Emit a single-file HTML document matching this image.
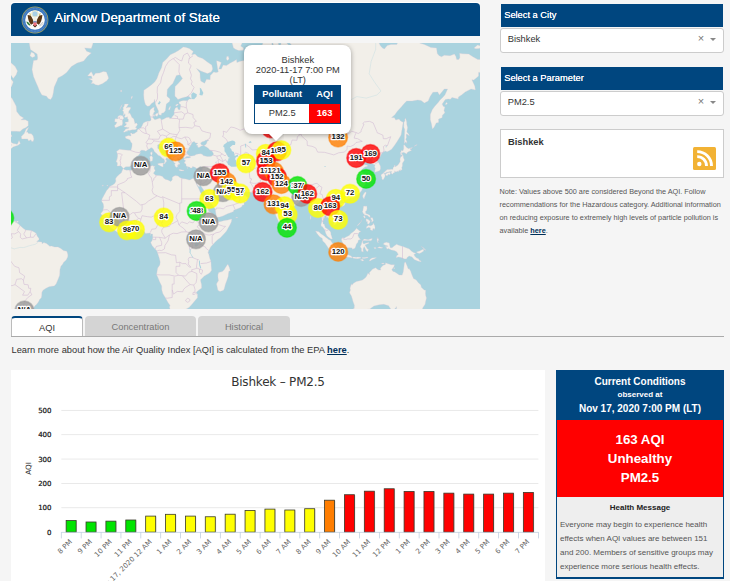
<!DOCTYPE html>
<html lang="en">
<head>
<meta charset="utf-8">
<title>AirNow Department of State</title>
<style>
*{box-sizing:border-box;margin:0;padding:0}
html,body{width:730px;height:581px;overflow:hidden;background:#f5f5f5;font-family:"Liberation Sans",Arial,sans-serif;color:#333}
.abs{position:absolute}
#hdr{left:11px;top:3px;width:469px;height:33px;background:#00467f;border-radius:4px 4px 0 0}
#hdr .t{position:absolute;left:43.3px;top:6px;font-size:13.3px;color:#fff;white-space:nowrap;line-height:17px;text-shadow:0 0 0.4px #fff}
#map{left:11px;top:43px;width:469px;height:266px;background:#aad3df;overflow:hidden}
.ph{background:#00467f;color:#fff;font-size:9.3px;line-height:22.6px;padding-left:3.2px;height:23.5px;text-shadow:0 0 0.3px #fff}
.sel{background:#fff;border:1px solid #ccc;border-radius:3px;height:24.5px;font-size:9.3px;line-height:21.8px;padding-left:6.7px;color:#333}
.tab{top:316px;height:21px;font-size:9.3px;text-align:center;line-height:23.6px;border-radius:4px 4px 0 0}
.tab.off{background:#d4d4d4;color:#777}
.tab.on{background:#fff;border:1px solid #bbb;border-top:2px solid #00467f;border-bottom:none;color:#333;line-height:20.6px}
#chart{left:11px;top:370px;width:534px;height:211px;background:#fff}
#cc{left:556px;top:370px;width:168px;height:209px;background:#eee;border:1px solid #00467f;border-bottom-width:2px}
#pop{position:absolute;left:233.4px;top:2px;width:106.8px;height:88.5px;background:#fff;border-radius:8px;box-shadow:0 1px 5px rgba(0,0,0,.35);padding-top:10px;text-align:center;font-size:9.3px;color:#333}
#pop .l{line-height:10px;height:10px}
#pop table{position:absolute;left:9.8px;top:39.5px;width:86.8px;border-collapse:collapse;border:1px solid #00467f;font-size:9.3px}
#pop th{background:#00467f;color:#fff;height:19px;font-weight:bold;padding:0 0 1.5px 0;line-height:10px}
#pop td{height:19.6px;padding:0 0 1px 0;line-height:10px;background:#fff;color:#333}
#pop td.v{background:#ff0000;color:#fff;font-weight:bold}
#tip{position:absolute;left:257.5px;top:90.5px;width:15px;height:10px;overflow:hidden}
#tip:after{content:"";position:absolute;left:2.5px;top:-5px;width:10px;height:10px;background:#fff;transform:rotate(45deg);box-shadow:0 1px 5px rgba(0,0,0,.35)}
.x{font-size:11px;color:#777;line-height:12px;width:8px;text-align:center}
.car{width:0;height:0;border-left:3px solid transparent;border-right:3px solid transparent;border-top:3.5px solid #888}
#rss{left:500px;top:129px;width:224px;height:49px;background:#fff;border:1px solid #ccc;padding:7px 0 0 7px;font-size:9.3px;color:#333}
#note{left:499.5px;top:185px;width:226px;font-size:7.3px;line-height:13px;color:#555;white-space:normal}
#note b{color:#00305a}
#learn{left:11.5px;top:344px;font-size:9.3px;line-height:12px;color:#333;white-space:nowrap}
#learn b{color:#00305a}
#cc .h{background:#00467f;color:#fff;font-weight:bold;text-align:center;height:50px;margin:-1px -1px 0 -1px;padding-top:5px}
#cc .h .a{font-size:10px;line-height:13px;margin-top:-0.5px}
#cc .h .b{font-size:8px;line-height:14px}
#cc .h .c{font-size:10px;line-height:14px}
#cc .r{background:#ff0000;color:#fff;font-weight:bold;text-align:center;font-size:13.3px;line-height:19px;height:77px;padding-top:10px}
#cc .m{font-size:8px;line-height:14px;color:#555;padding:3px 0 0 3px;white-space:normal}
#cc .m .t{font-size:8px;font-weight:bold;color:#222;text-align:center;line-height:16px;padding-right:3px;margin-bottom:1.7px}
</style>
</head>
<body>
<div class="abs" style="left:11px;top:2px;width:469px;height:2px;background:#fff;border-radius:3px 3px 0 0"></div>
<div id="hdr" class="abs"><svg width="30" height="30" viewBox="-15 -15 30 30" style="position:absolute;left:8.9px;top:2.2px">
<circle r="13.4" fill="#a9a55c"/><circle r="12.7" fill="#3a76bd"/><circle r="11.3" fill="none" stroke="#7fa8d8" stroke-width="0.7" stroke-dasharray="0.7 0.8"/><circle r="9.8" fill="#fcfcfa"/>
<circle cx="0" cy="-6.1" r="2.7" fill="#a8cfe6"/><circle cx="0" cy="-6.1" r="3.3" fill="none" stroke="#dedcb4" stroke-width="0.7"/>
<path d="M-7.4-4.9L-4.3-4.5C-3.3-3-2.6-1.4-1.7 0.4L-1.5 3.2L-3.9 4.7C-5.7 3-7-0.2-7.4-4.9Z" fill="#5b3716"/>
<path d="M7.4-4.9L4.3-4.5C3.3-3 2.6-1.4 1.7 0.4L1.5 3.2L3.9 4.7C5.7 3 7-0.2 7.4-4.9Z" fill="#5b3716"/>
<path d="M-1.7-1.4C-0.9-2.6 0.9-2.6 1.7-1.4L1.7 1.6L-1.7 1.6Z" fill="#f1efe6"/>
<path d="M-2.2 5.6L0 7.6L2.2 5.6L1.2 4.6L-1.2 4.6Z" fill="#4a2e14"/>
<path d="M-1.6 1.4H1.6V2.6H-1.6Z" fill="#2a5aa8"/><path d="M-1.6 2.6H1.6V4.2C1.6 5.2 0.7 5.7 0 6C-0.7 5.7-1.6 5.2-1.6 4.2Z" fill="#ee6f7b"/>
<path d="M-8.6 1.6C-8.2 3.8-6.8 5.4-4.4 5.8C-5.2 3.6-6.4 2.2-8.6 1.6Z" fill="#2f7a3a"/>
<path d="M4.2 5.6L8 2M4.8 6.2L8.6 3.2" stroke="#aaa" stroke-width="0.6" fill="none"/>
<path d="M-5.2-6.8L-4.5-4.6M5.2-6.8L4.5-4.6" stroke="#c8b44a" stroke-width="0.9"/>
</svg><div class="t">AirNow Department of State</div></div>
<div id="map" class="abs">
<svg width="469" height="266" viewBox="0 0 469 266" style="position:absolute;left:0;top:0">
<path d="M111.9 125.9L110.2 130.1L108.7 131.0L105.6 133.9L104.5 135.9L104.9 138.1L103.9 140.3L102.0 141.8L98.6 143.5L97.6 145.3L95.6 147.4L92.9 152.4L91.0 155.9L90.7 158.3L92.3 160.9L92.7 163.7L91.8 167.9L89.8 170.4L91.4 172.9L91.2 174.9L92.7 175.8L94.6 177.8L97.1 180.5L98.0 182.4L99.4 184.5L102.6 186.6L106.0 189.0L108.5 190.2L111.7 189.2L115.5 188.7L119.2 189.6L122.8 188.1L125.4 186.9L129.6 186.4L131.9 186.9L133.4 188.8L134.6 190.4L136.9 190.2L138.9 190.0L140.1 190.9L141.6 191.1L141.8 194.9L141.0 197.7L139.7 199.6L141.2 202.7L144.1 205.9L145.6 207.6L146.6 209.9L148.3 215.2L149.2 219.0L148.8 221.9L146.7 225.0L146.2 227.6L145.6 231.7L147.1 235.1L148.7 238.9L150.7 243.0L150.7 246.5L151.9 250.7L154.5 255.0L157.0 259.5L159.1 262.4L158.4 264.0L159.3 266.9L161.0 268.1L162.4 268.7L165.2 267.1L167.9 266.9L173.6 266.9L178.0 264.6L180.8 261.5L183.9 257.8L186.5 254.7L186.5 251.3L185.2 249.4L186.9 247.7L190.7 245.0L190.5 241.3L189.8 238.7L189.6 236.7L193.4 232.9L197.4 230.7L199.1 229.5L200.6 227.2L200.2 223.3L200.0 218.5L198.9 215.6L197.9 211.4L197.0 209.7L197.7 207.8L198.7 206.1L199.8 203.8L201.2 202.3L204.0 199.3L206.9 196.4L209.4 194.7L212.2 191.7L215.4 188.3L217.3 184.7L218.9 182.0L220.4 178.7L220.8 176.0L219.3 176.2L216.8 177.0L213.4 177.4L208.8 178.7L206.9 178.5L205.4 176.8L204.4 176.4L205.5 174.5L204.4 173.7L201.6 170.8L198.9 169.2L197.7 168.2L196.6 163.9L194.3 162.3L193.9 160.7L193.8 157.9L193.4 155.9L190.9 152.0L189.0 148.4L187.5 145.0L185.9 142.3L184.8 139.7L185.2 139.1L185.9 141.4L187.1 142.9L188.3 143.9L189.0 142.0L189.7 140.1L189.4 142.3L190.1 143.3L191.1 144.8L193.2 148.0L194.1 149.9L195.5 151.5L197.2 154.2L197.6 156.9L199.3 159.5L201.4 161.7L203.1 164.5L204.2 166.1L204.8 170.2L205.4 173.1L205.9 174.3L208.8 174.1L212.0 172.9L214.5 171.8L216.6 170.8L220.2 169.4L222.5 168.6L222.7 167.3L226.1 165.9L228.4 165.1L230.5 163.9L231.6 162.1L233.1 161.9L233.0 159.5L234.7 159.1L236.0 157.1L236.9 154.8L235.4 153.6L234.7 152.6L232.4 152.0L231.1 150.9L230.5 149.7L230.4 146.9L229.8 147.6L229.7 148.2L228.4 149.0L226.7 150.9L224.4 151.5L221.7 151.7L220.8 150.7L221.3 149.7L221.3 147.8L220.7 147.3L219.8 148.4L219.8 150.1L218.9 149.0L218.5 146.7L217.5 144.8L216.2 143.8L215.3 142.0L214.5 140.3L214.1 139.2L215.4 139.0L216.4 138.1L217.5 138.8L218.7 139.2L219.8 141.4L221.0 143.5L223.2 144.6L225.2 146.1L227.6 146.4L229.7 145.3L231.4 145.5L232.0 147.2L233.1 148.3L235.4 148.8L238.5 149.0L240.4 149.4L241.7 149.5L244.0 149.1L246.1 149.3L248.7 148.8L249.9 149.7L250.7 150.1L251.4 152.0L252.9 152.6L254.1 153.8L256.9 153.9L256.6 154.8L254.5 155.2L255.0 156.7L257.1 158.3L259.2 158.1L260.4 157.5L260.9 155.4L261.5 156.3L261.5 157.7L261.7 159.9L261.7 161.9L262.4 165.1L263.0 167.9L264.0 170.0L265.1 173.3L266.6 176.4L268.2 179.7L269.3 182.0L270.6 183.2L272.0 181.8L273.7 180.8L275.2 178.9L275.0 176.4L276.0 173.5L275.6 170.6L275.8 168.8L277.7 167.9L279.8 166.5L281.7 164.5L283.4 162.9L284.9 161.3L287.6 160.0L288.7 158.3L289.1 156.9L291.0 156.5L293.5 156.3L295.4 155.2L297.1 154.4L297.8 155.2L298.2 157.1L298.8 158.5L299.9 159.7L301.3 161.3L302.4 162.5L303.0 165.1L302.4 167.9L304.7 168.2L306.2 167.1L307.6 165.7L308.9 167.1L309.1 169.4L309.8 171.8L310.8 174.9L311.0 177.2L310.6 179.5L310.0 181.6L310.2 183.3L311.2 183.5L312.7 185.4L314.0 187.5L314.6 190.0L315.9 192.8L317.6 194.3L319.9 195.9L321.4 195.9L320.7 193.6L319.9 191.3L319.9 189.8L319.3 188.5L317.6 186.8L315.9 185.4L314.6 184.9L313.6 182.4L313.3 181.0L312.1 181.0L311.9 178.5L312.7 176.2L313.4 174.5L313.5 173.1L314.4 172.7L315.3 173.1L315.2 174.3L316.7 174.3L318.2 175.7L319.2 177.2L320.1 178.3L322.0 178.7L323.0 179.7L322.6 182.2L323.7 181.8L325.8 180.3L326.4 178.7L327.3 178.6L328.9 177.8L330.6 176.8L331.0 175.8L331.3 173.9L331.0 172.2L330.4 169.2L329.1 167.7L327.9 166.7L326.0 164.9L324.3 162.5L324.7 160.3L326.2 158.7L327.0 157.9L328.7 156.9L330.8 156.9L331.9 157.3L332.1 158.9L332.9 159.3L333.4 157.5L335.9 156.5L338.2 155.9L339.3 154.6L340.5 155.2L342.8 154.4L345.2 153.0L347.9 150.7L349.6 149.0L350.7 147.6L351.5 145.5L352.8 143.3L354.6 141.2L355.1 139.2L353.2 138.4L355.1 137.0L355.1 135.3L353.4 133.5L352.1 129.4L350.2 128.3L350.6 126.9L352.3 125.2L354.4 123.8L356.3 123.4L356.5 122.2L354.2 121.7L352.8 121.2L350.6 122.8L349.4 121.9L350.0 121.2L348.1 120.5L347.1 118.3L348.7 117.8L350.7 116.1L353.4 114.1L354.9 113.6L355.7 114.6L354.0 117.1L354.6 118.6L356.5 117.4L359.9 115.9L361.4 117.1L361.6 119.1L360.6 120.5L362.4 121.2L364.1 121.9L363.5 123.8L364.3 125.5L363.7 128.3L364.1 129.3L366.2 128.5L367.9 128.0L369.0 127.3L369.6 125.5L369.4 123.1L368.4 121.2L367.5 119.3L365.8 117.8L366.0 116.4L367.5 115.9L369.0 114.1L370.2 111.4L371.1 110.1L372.1 109.3L374.2 108.0L376.1 108.8L378.2 107.8L380.6 106.2L383.1 103.0L385.8 99.0L388.0 95.4L390.1 92.0L390.7 88.2L391.5 83.6L392.2 79.3L389.6 78.0L388.0 76.1L384.8 77.1L383.5 74.8L380.6 74.5L383.9 71.8L386.1 68.5L390.3 63.9L393.4 60.3L395.7 58.1L401.0 58.1L406.7 57.0L410.1 57.6L413.4 60.0L417.2 58.1L419.1 53.6L421.9 49.3L426.7 48.9L428.4 52.0L433.3 46.0L436.6 46.0L433.9 52.0L431.4 54.7L428.6 57.4L427.4 59.2L423.8 63.2L421.4 66.4L419.3 71.5L419.3 76.8L420.4 80.6L421.4 86.1L423.1 84.3L425.2 79.9L427.6 79.6L427.6 76.1L431.1 74.8L431.4 72.2L433.9 69.8L433.0 67.4L433.9 63.9L432.2 63.2L431.2 61.1L434.3 56.6L437.1 55.9L439.4 56.3L441.0 54.4L447.2 56.1L447.4 54.0L450.5 52.0L454.3 48.9L460.0 46.0L464.4 46.9L463.8 43.1L460.9 36.7L462.8 37.1L464.7 35.4L467.6 33.1L467.6 29.4L473.3 29.4L477.1 35.4L477.1 16.0L466.8 16.5L461.9 13.8L457.7 11.1L451.4 10.8L448.6 10.3L448.9 14.4L447.8 16.5L445.7 16.5L444.8 13.3L443.4 11.1L439.0 12.7L433.3 12.2L430.5 13.8L428.2 12.7L426.3 10.6L425.5 4.9L420.0 4.6L413.4 1.4L408.6 0.1L404.8 -4.2L389.6 -6.1L385.8 1.4L380.1 1.4L376.2 2.5L373.4 6.0L371.5 4.9L369.6 3.1L368.4 0.8L364.8 -7.4L313.5 -36.7L283.0 -10.6L276.3 -10.6L276.5 -2.3L280.1 1.4L281.7 6.6L280.1 8.9L279.2 3.7L273.5 -2.3L270.6 -2.9L269.5 3.1L267.8 2.5L265.9 -6.1L262.1 -6.7L261.7 -1.1L263.8 8.9L263.8 14.4L267.4 16.5L270.6 21.1L271.6 23.1L269.3 22.1L265.5 18.0L263.4 19.6L262.1 24.6L260.2 28.9L255.4 28.0L258.8 26.5L260.7 21.1L261.3 14.9L261.3 6.0L260.7 -1.1L257.3 -7.4L253.5 -4.2L250.1 4.9L251.0 12.2L250.5 16.0L253.1 19.6L249.7 18.6L246.5 14.9L243.0 12.2L239.0 11.4L237.9 13.8L239.0 16.5L236.4 19.1L232.6 17.5L228.4 18.6L225.9 19.6L225.5 16.5L223.1 18.0L219.3 20.1L215.4 22.6L212.2 22.1L210.3 26.1L207.8 26.1L210.3 19.6L206.9 18.0L205.5 17.8L206.5 25.1L207.3 28.9L205.0 29.4L202.7 28.9L199.3 32.6L199.1 36.7L195.5 36.2L193.6 40.2L189.8 38.0L189.2 34.5L189.0 29.9L185.6 25.6L189.8 28.0L196.4 30.6L200.2 28.9L201.7 26.1L200.8 22.1L196.4 19.1L191.7 15.4L186.9 13.8L184.0 11.1L180.6 11.7L182.3 8.6L178.3 5.5L174.5 4.3L172.2 4.0L167.9 7.2L164.1 9.4L159.3 11.7L155.5 16.0L151.7 19.6L150.6 24.6L147.9 29.9L146.0 35.4L143.7 38.9L140.3 41.9L136.9 44.4L132.9 47.3L132.7 52.0L133.0 55.9L133.8 59.6L134.6 61.8L136.5 63.2L138.4 62.9L140.8 60.3L142.9 58.9L143.5 56.3L144.1 59.6L144.7 62.1L145.8 64.3L147.5 68.1L147.3 70.2L147.9 71.8L150.2 72.2L150.7 70.2L152.8 69.8L154.4 67.8L154.9 63.9L155.3 61.1L158.5 58.5L159.1 55.9L155.9 53.2L156.3 46.5L159.1 43.1L161.8 40.6L163.5 36.7L165.4 32.6L169.0 31.7L171.5 35.4L169.8 37.6L167.1 40.6L164.1 43.6L163.9 49.7L163.9 53.2L165.6 54.7L166.9 56.4L170.7 55.1L174.5 54.0L177.8 53.2L180.6 56.1L178.3 56.1L176.4 57.7L172.6 57.4L170.3 57.9L167.9 58.9L168.3 60.7L169.8 61.8L169.4 63.9L169.0 66.7L167.3 66.6L166.2 64.1L164.1 65.3L163.1 68.5L163.3 71.2L161.2 73.7L160.4 75.3L158.7 75.5L158.2 74.2L155.5 74.5L152.8 76.1L150.4 77.1L149.0 75.1L146.2 76.1L143.9 76.8L142.6 75.5L141.8 74.2L142.2 71.8L142.8 69.5L143.9 68.8L142.9 66.7L143.3 64.3L142.0 64.6L139.5 66.4L138.8 67.8L138.6 71.5L139.5 73.8L140.1 76.4L139.3 78.0L136.7 78.3L134.6 78.7L132.3 80.1L131.1 82.7L129.8 84.9L127.7 85.9L126.2 87.0L126.2 88.5L123.3 90.5L121.1 90.9L120.7 89.9L119.4 89.9L120.1 93.0L117.4 92.5L114.0 93.7L115.0 95.4L117.3 96.2L119.0 97.0L119.7 99.0L121.1 100.4L120.9 103.8L119.9 107.3L117.4 107.3L112.3 106.7L108.5 106.2L105.5 108.6L106.4 110.6L106.6 113.0L106.2 115.5L105.1 118.8L106.2 119.5L106.4 121.0L106.0 123.1L108.1 123.1L109.9 122.7L111.2 124.3L112.5 125.5L113.1 125.0L114.8 123.8L118.4 123.7L119.5 123.1L121.8 121.7L122.8 119.5L123.5 118.9L122.6 117.2L123.5 115.4L124.9 114.1L127.3 112.4L129.4 110.1L129.0 108.6L130.2 107.3L131.9 107.3L133.4 107.5L134.9 108.2L137.0 106.5L138.8 105.7L140.1 104.6L141.8 105.4L142.8 106.9L143.3 108.6L145.6 110.6L147.1 112.3L149.0 112.9L150.2 113.9L151.7 115.4L153.0 115.9L153.8 118.3L153.0 120.6L153.8 120.9L154.7 119.3L155.8 118.1L154.7 116.6L155.5 114.8L157.2 115.6L158.1 116.4L158.4 115.5L157.4 114.3L155.3 113.1L153.4 112.0L154.0 111.1L152.1 111.0L150.2 109.6L149.0 106.9L146.7 105.2L146.7 103.0L146.6 102.0L148.1 101.2L149.4 101.3L148.8 102.0L149.6 103.6L150.6 102.2L151.5 103.0L152.1 105.4L154.4 107.0L156.3 108.3L158.4 109.8L159.9 111.1L160.2 112.6L160.1 114.9L161.2 116.4L162.5 118.6L163.3 119.9L164.4 120.3L163.5 121.2L164.3 123.6L165.8 124.4L166.3 123.6L167.2 124.4L166.5 121.9L167.7 122.2L167.3 120.9L168.8 121.6L168.8 120.3L167.5 119.3L166.7 117.6L167.5 117.8L166.3 115.9L166.7 114.5L168.1 116.0L169.6 115.5L168.4 114.3L169.6 113.6L172.4 113.8L172.8 114.4L173.0 115.6L174.3 114.5L175.5 113.5L178.2 113.4L178.5 112.8L176.6 111.6L175.5 109.6L176.2 107.8L177.6 107.0L177.7 105.2L179.7 102.5L180.6 100.4L181.7 99.0L183.3 98.6L184.6 100.1L186.9 100.1L185.0 102.0L186.7 102.6L186.8 104.2L188.1 104.5L190.5 102.9L192.6 102.2L190.3 101.7L189.6 99.9L191.3 98.7L193.2 98.3L194.6 97.3L197.2 96.9L197.9 97.3L196.0 98.4L195.7 100.2L194.3 102.1L193.0 102.4L194.1 103.4L195.1 103.8L197.5 105.4L198.7 106.9L201.2 108.3L202.4 110.5L202.2 112.0L200.2 113.3L198.7 113.4L196.2 113.5L194.1 113.1L192.2 112.6L191.5 111.6L190.0 110.7L187.4 110.9L185.0 111.4L183.7 112.4L180.8 113.0L178.6 112.9L178.3 113.4L180.0 114.0L178.1 114.9L176.2 114.9L173.4 115.6L172.8 117.1L174.3 117.1L174.2 118.6L173.4 119.3L173.2 120.1L174.9 121.0L175.1 123.1L176.8 123.8L178.5 124.0L179.5 125.0L181.0 124.9L181.6 123.5L184.0 124.3L185.6 125.4L187.8 124.8L189.0 123.6L190.5 124.2L191.9 123.8L191.3 125.5L191.2 126.6L191.5 129.1L190.7 130.3L189.8 132.8L189.3 134.5L188.3 136.2L186.3 136.6L184.6 136.3L183.7 135.7L182.1 135.5L181.0 135.7L180.0 136.4L178.2 137.1L174.9 136.0L171.1 135.6L168.8 134.5L167.1 133.1L164.3 132.6L162.2 133.5L161.2 134.6L161.2 137.0L159.7 138.4L157.0 137.0L154.7 136.4L152.5 135.0L151.9 133.7L150.2 133.0L148.3 132.6L146.2 132.5L144.3 131.9L142.4 130.3L143.6 128.4L144.3 127.3L143.3 125.9L143.2 124.5L144.2 123.0L142.8 123.5L141.9 122.4L139.8 123.2L137.9 123.2L136.3 123.2L134.1 123.6L132.9 123.7L129.0 123.6L125.6 124.3L123.3 125.6L121.9 126.2L119.3 127.6L117.5 127.1L115.7 127.2L113.1 126.4L113.0 125.7ZM112.3 88.9L113.3 89.2L115.3 88.2L116.3 88.5L116.7 87.3L118.5 87.6L121.1 86.8L123.6 86.8L125.0 86.4L125.7 85.6L125.9 84.9L124.5 84.6L125.0 83.6L125.6 83.2L126.5 81.5L125.6 80.1L123.7 80.6L123.8 79.6L123.3 78.0L123.0 76.4L122.0 75.1L120.9 74.6L120.5 73.5L119.3 70.8L118.2 70.0L117.1 70.2L118.2 69.1L117.6 68.6L119.2 66.2L119.7 65.0L119.3 64.3L116.9 64.3L115.2 65.0L115.9 63.7L117.3 61.6L117.4 60.9L113.6 61.1L113.1 63.2L112.1 64.6L112.3 66.7L111.4 67.8L112.7 68.8L112.3 72.5L113.6 71.2L113.8 70.5L114.3 72.0L113.4 73.8L113.9 74.6L115.5 74.2L116.7 73.8L116.3 75.1L117.1 76.4L117.6 76.4L117.3 77.4L117.3 78.7L115.9 79.0L114.4 79.0L114.1 80.6L115.3 80.4L115.3 81.8L114.2 82.7L113.1 83.3L113.4 84.1L115.7 84.3L117.1 84.7L118.0 84.3L117.4 85.5L116.5 85.5L114.6 86.1L113.6 87.6ZM109.1 72.2L111.5 72.8L112.5 74.6L112.8 75.5L111.4 76.8L111.5 78.8L111.7 80.1L111.1 82.4L109.8 82.6L107.5 83.6L104.5 84.7L103.4 82.7L104.9 81.2L106.0 79.3L103.7 78.7L103.9 76.8L104.1 75.8L106.8 75.8L107.5 74.8L106.4 74.5L107.4 73.0ZM76.5 33.1L79.4 29.4L80.3 28.7L82.6 33.1L84.5 30.3L88.5 29.9L92.3 28.4L95.4 28.9L97.3 34.0L97.5 35.4L95.6 38.0L94.2 38.7L91.8 40.6L87.4 42.3L84.5 41.7L82.6 40.4L80.0 40.6L81.3 39.1L81.3 37.6L77.5 35.8L81.3 35.4L80.3 33.1ZM16.6 -7.4L18.5 1.4L19.4 6.6L26.1 11.1L26.7 14.9L26.1 17.0L22.5 17.5L21.0 26.5L22.5 33.5L24.8 38.9L27.0 44.0L28.6 48.1L30.9 52.0L35.6 53.2L37.1 55.5L39.6 56.6L41.3 54.0L42.3 50.1L43.2 44.0L46.1 37.6L47.0 34.9L51.6 32.6L55.6 29.4L60.4 23.6L66.1 20.1L72.7 18.0L76.5 13.3L80.3 10.0L75.6 8.3L73.7 4.9L80.3 5.5L81.9 0.8L81.9 -7.4ZM18.9 12.7L21.3 14.6L24.2 13.3L23.2 10.6L20.4 8.9ZM-8.2 46.0L-2.4 48.5L0.0 49.7L-0.4 45.6L-3.4 43.1L-6.3 41.0L-2.4 41.9L0.4 44.0L2.3 38.9L-0.5 35.4L-5.3 32.2L-5.3 29.4L-0.5 31.7L2.3 35.4L5.2 31.7L6.5 28.0L4.2 23.6L1.4 21.1L-4.4 16.0L-7.2 10.6L-8.2 7.8ZM-8.2 60.3L-5.3 62.1L-2.4 59.6L-0.5 55.9L0.6 54.4L3.3 59.6L5.2 63.2L5.7 68.5L9.0 72.8L12.8 75.1L9.9 76.8L14.3 76.8L17.2 78.3L17.3 82.4L15.1 84.6L11.8 86.1L9.0 88.5L5.2 88.3L1.4 88.2L-3.2 88.5L-5.3 91.1L-8.2 92.5L-8.2 94.0L-3.4 91.5L0.4 91.7L1.0 93.4L-2.4 94.7L-0.2 95.4L-0.5 97.3L0.4 99.5L2.3 100.6L5.2 100.9L6.1 101.4L7.1 99.8L8.0 97.6L9.4 100.4L7.1 102.2L2.1 104.1L-1.7 107.3L-2.6 106.2L-2.1 104.1L0.4 102.2L-0.2 100.9L-2.4 102.4L-4.4 102.8L-8.2 105.7ZM17.7 84.3L15.1 86.1L13.2 90.5L10.3 93.4L10.7 95.9L13.7 95.9L16.6 95.9L17.7 97.9L20.0 96.8L20.4 98.2L22.1 98.6L22.9 96.1L22.1 92.8L20.4 90.8L17.5 90.5L16.6 89.0L15.4 89.3L16.6 86.7ZM-8.2 176.6L-6.8 177.4L-4.2 178.3L-0.5 179.3L1.0 178.5L5.4 178.2L4.2 179.1L7.3 180.8L9.0 182.4L12.4 185.6L14.7 187.1L18.1 187.3L20.6 187.7L23.6 189.2L25.0 190.2L26.3 193.2L28.0 195.5L28.0 196.8L25.7 198.5L27.2 198.7L30.9 198.9L31.0 200.8L32.9 199.6L35.6 200.6L38.8 203.2L40.6 203.0L43.6 204.0L47.0 203.9L49.9 205.5L52.4 207.6L55.8 208.3L56.4 209.9L56.9 212.0L56.7 213.9L55.2 216.9L52.7 219.2L51.6 221.3L49.9 223.3L48.9 226.8L48.8 229.9L48.6 232.5L47.6 235.1L46.5 237.7L45.1 241.1L43.2 243.1L40.9 243.2L38.1 243.8L35.0 245.3L32.0 247.3L30.9 249.2L30.7 252.8L30.3 254.7L28.6 256.5L27.4 259.1L25.7 261.3L24.0 262.8L21.5 266.2L18.7 269.1L16.2 269.0L13.2 267.9L12.0 266.9L11.8 268.3L14.1 269.9L14.7 276.3L-8.2 276.3ZM5.4 179.4L7.1 179.3L7.3 178.0L5.7 178.2ZM371.9 136.8L370.9 136.2L370.9 134.4L370.2 133.0L370.0 131.7L371.3 131.0L372.3 130.1L373.2 129.2L374.5 128.0L376.2 126.5L378.5 126.5L380.4 126.2L382.0 126.2L382.0 124.8L383.3 123.4L383.3 122.4L384.4 121.9L383.9 122.9L384.2 123.7L386.1 122.7L387.7 121.0L389.2 118.6L389.0 116.1L389.6 114.4L390.1 112.9L390.9 113.8L391.3 112.1L392.2 112.4L392.4 114.6L393.4 116.9L392.6 118.6L391.5 120.1L391.4 123.1L390.7 124.8L391.2 126.2L389.4 128.0L389.2 126.4L388.9 127.5L388.0 127.2L387.4 128.7L386.5 127.9L386.1 128.7L383.9 128.7L383.6 127.8L383.7 129.4L382.3 130.1L381.5 131.3L380.2 130.3L380.2 129.6L380.8 128.6L379.5 128.4L378.2 128.8L375.1 129.4L374.7 130.2L372.4 130.2L373.8 131.0L373.8 131.9L374.3 132.8L373.4 134.8L372.6 136.2ZM374.3 131.6L375.7 130.3L376.2 129.9L378.2 129.3L379.3 129.6L379.5 130.5L378.5 131.8L377.2 131.2L376.2 133.0L375.3 132.4ZM389.8 112.4L390.9 111.5L391.9 111.4L390.1 110.1L391.3 109.5L391.5 110.1L392.6 109.3L395.8 111.0L396.0 109.8L397.9 108.4L400.6 107.4L399.3 106.7L399.7 104.8L397.8 105.7L395.9 104.8L393.3 101.7L392.7 102.0L392.7 105.8L392.0 107.8L390.2 107.4L390.0 108.8L389.3 109.7L389.8 111.2ZM393.4 100.6L394.9 98.7L396.0 100.4L395.8 98.2L394.7 96.5L395.5 94.2L395.1 91.7L395.8 91.1L398.5 93.0L397.6 91.1L395.8 89.0L396.6 84.6L395.8 81.5L395.7 79.0L394.7 75.5L393.9 75.8L393.9 78.3L393.0 78.7L392.8 82.1L392.8 84.0L393.7 86.4L393.6 89.6L393.4 93.4L393.4 97.5ZM354.4 149.0L355.3 149.7L354.6 151.7L353.4 154.6L353.1 156.1L351.9 154.2L351.7 152.8L353.2 150.1ZM329.8 161.5L331.5 163.5L333.4 162.3L334.4 160.5L333.4 159.7L331.1 160.1ZM275.1 179.9L277.1 181.6L277.9 182.4L279.0 184.5L278.6 186.2L277.5 186.9L276.5 187.3L275.8 187.1L275.1 185.4L275.0 183.3L275.2 181.4ZM216.9 221.3L218.3 224.3L219.3 227.8L217.9 228.2L217.5 230.7L217.2 233.4L216.0 237.1L214.5 241.1L213.4 245.3L212.6 247.3L209.0 248.6L206.9 247.3L206.2 243.9L205.5 241.1L206.5 239.1L207.5 237.7L206.9 234.1L206.9 231.7L207.7 229.5L211.3 228.6L213.2 226.8L214.5 224.5L216.0 222.3ZM352.7 162.9L354.6 163.2L355.7 162.9L356.1 165.3L355.7 167.5L354.6 168.2L354.7 170.4L356.8 171.2L358.9 172.2L359.3 174.5L357.8 173.7L356.5 172.5L354.7 172.0L353.4 172.4L353.2 170.8L352.5 171.0L351.3 168.2L351.9 167.8L352.1 165.9ZM355.3 185.4L357.8 184.3L359.5 184.9L359.1 186.6L361.4 187.7L362.2 185.2L363.3 186.6L364.1 184.7L363.7 182.4L362.0 179.9L362.0 181.4L360.5 182.4L358.7 183.1L358.0 182.0L355.5 183.7ZM359.7 174.7L361.6 174.7L362.4 177.4L361.0 179.3L360.5 179.1L360.8 177.0L359.9 176.6ZM355.3 175.8L357.4 176.6L358.2 177.8L359.1 177.2L359.1 179.1L358.0 180.7L357.2 181.2L356.1 179.9L356.8 178.7L355.3 178.5L355.1 176.6ZM346.2 182.6L347.7 181.0L350.2 178.5L350.7 176.8L350.0 178.7L348.7 180.8L346.9 182.4ZM352.3 172.9L353.8 172.9L354.4 174.5L353.6 175.3L352.8 174.1ZM330.6 195.7L331.8 194.6L333.1 195.3L335.1 194.0L338.2 192.4L340.1 190.2L342.0 189.0L344.0 187.2L345.4 185.2L347.1 186.4L347.9 187.4L350.0 188.5L348.3 189.2L347.5 190.5L346.9 192.3L347.7 194.3L349.6 196.6L347.5 197.0L346.8 199.4L345.4 201.0L344.8 203.2L343.9 205.3L341.4 206.3L341.0 204.9L338.2 204.7L335.9 205.1L335.7 204.2L332.9 204.0L332.5 201.5L331.0 198.6L330.4 196.6ZM304.5 188.0L307.9 188.7L309.6 190.4L311.0 191.4L313.3 193.0L315.0 194.5L316.1 195.3L317.6 196.6L319.9 197.6L320.7 199.3L321.8 200.4L322.8 202.8L324.9 204.2L324.7 206.4L324.5 209.5L323.5 208.9L322.0 209.7L321.6 208.5L317.8 205.7L314.1 200.3L311.7 197.9L311.2 195.3L308.9 194.0L306.0 190.6ZM323.3 211.4L324.9 209.7L326.4 210.1L329.8 211.2L333.2 211.7L334.2 210.6L335.3 211.2L337.6 212.1L340.1 212.9L340.9 214.1L341.0 215.0L338.2 214.2L334.4 214.1L330.6 213.1L327.7 213.1L325.6 212.3ZM341.0 214.0L343.3 214.1L345.2 214.3L346.8 214.1L349.6 214.3L350.0 215.0L346.8 215.7L343.9 215.4L342.4 215.2ZM351.1 214.4L353.4 214.4L357.2 214.1L356.8 214.8L353.4 215.5L351.1 215.2ZM349.6 216.5L351.5 216.3L353.0 217.5L351.5 218.1L349.6 217.1ZM358.2 218.1L359.1 216.3L361.0 215.0L365.4 214.4L363.9 215.6L361.0 216.7L359.1 218.1ZM360.6 195.5L357.2 196.7L353.4 196.0L351.9 197.0L351.1 198.5L350.4 201.3L349.2 203.8L350.4 205.5L350.4 208.2L352.3 209.1L352.1 206.1L353.2 203.6L354.4 206.1L355.3 207.8L356.5 208.7L357.6 206.6L356.5 206.0L355.1 203.8L354.0 202.1L356.3 201.1L358.0 200.2L357.8 199.6L354.6 200.2L353.0 201.0L351.9 200.2L351.7 197.6L354.0 197.6L357.2 197.6L360.1 197.7L361.4 195.7ZM366.0 194.3L366.7 195.9L368.1 195.7L367.1 197.2L368.4 197.9L366.7 197.7L367.5 200.0L366.4 199.1L366.0 196.8ZM366.5 204.4L368.6 203.8L372.1 204.7L370.5 205.3L367.7 205.1ZM362.9 204.6L364.8 204.4L365.2 205.3L363.9 205.8L362.9 205.1ZM372.9 200.1L375.3 199.2L378.3 200.1L378.7 202.3L379.3 204.7L381.0 204.8L383.5 202.7L385.6 201.3L387.1 202.0L390.9 203.3L392.0 203.6L396.4 205.2L398.1 205.7L400.6 208.3L402.9 209.7L404.4 210.1L404.5 211.0L402.9 211.3L403.8 213.3L405.7 215.0L407.3 215.6L408.6 217.5L410.3 218.0L409.7 218.7L406.7 218.0L403.2 216.5L401.0 213.9L398.1 212.9L396.2 214.4L395.7 215.8L393.8 216.0L390.2 214.6L387.7 213.9L385.0 214.4L385.8 212.5L387.3 211.4L385.8 208.9L383.9 207.8L380.4 206.9L378.2 205.9L377.6 205.4L375.9 206.3L375.7 204.7L374.3 203.8L377.2 203.2L376.2 202.7L374.3 202.3L372.4 201.3ZM405.4 209.1L408.6 208.0L411.5 206.4L413.0 206.6L412.4 208.3L410.5 209.5L408.6 210.4L406.7 210.1ZM410.1 203.4L412.4 204.7L414.3 206.6L414.5 207.6L413.5 206.4L411.5 204.6ZM394.3 218.8L396.2 222.9L397.2 226.0L398.1 225.6L399.7 228.2L400.6 230.9L402.5 235.6L405.3 237.1L407.1 239.4L409.9 242.0L410.3 244.2L413.2 246.9L414.7 247.3L414.5 250.3L414.7 252.4L415.5 255.1L414.6 258.6L414.1 261.2L412.0 264.4L411.1 266.6L410.3 267.9L410.1 269.4L409.0 276.3L388.6 276.3L388.2 270.8L386.7 270.6L386.7 269.0L386.0 267.4L385.4 269.5L383.9 269.7L384.8 267.1L385.6 265.1L385.4 263.5L385.0 264.6L382.9 266.9L381.8 268.6L381.2 269.0L379.9 266.1L378.5 264.2L377.6 262.7L372.8 261.3L368.4 261.7L362.9 263.1L358.9 266.0L355.1 266.6L351.7 266.8L350.4 267.8L347.5 269.3L345.0 269.2L342.3 267.7L342.0 265.9L343.2 265.3L343.4 262.3L342.0 258.6L341.2 255.4L340.4 253.0L338.5 249.7L339.4 247.1L339.0 245.3L340.4 240.7L340.9 242.2L342.2 240.4L345.4 238.5L348.8 237.7L351.5 236.9L354.4 234.7L355.7 233.1L357.0 229.9L358.4 231.7L358.4 229.5L360.1 227.8L361.4 226.2L364.6 224.7L366.4 226.2L367.1 226.8L368.6 227.0L369.8 227.0L369.4 225.2L370.5 223.9L372.2 222.2L374.2 221.7L374.7 219.8L376.2 220.6L378.0 221.1L380.1 221.7L383.5 221.7L382.9 223.7L381.8 225.2L380.8 226.7L382.0 228.4L383.9 228.9L385.8 230.3L388.2 231.9L391.1 232.1L392.2 229.1L392.6 226.2L393.1 222.6L393.4 220.0ZM383.1 270.9L384.8 270.6L386.0 271.2L384.8 271.8L383.3 271.5ZM370.5 220.4L372.4 220.0L373.4 220.4L372.1 221.1L370.9 221.0ZM382.7 224.8L383.7 224.8L383.7 225.8L382.7 225.6ZM221.0 -0.5L222.5 4.9L225.0 6.6L227.8 7.5L232.2 7.2L232.6 4.9L229.7 3.1L231.6 -1.1L233.5 -7.4L220.2 -7.4ZM215.3 16.0L216.4 17.5L218.1 16.0L217.3 13.3L215.8 13.6ZM234.5 10.6L236.4 12.2L238.3 11.1L236.9 8.3L235.0 8.3ZM146.7 120.7L148.5 120.3L152.8 120.0L151.9 121.9L152.3 123.1L151.9 124.0L150.6 123.6L147.1 121.7ZM138.8 113.4L140.7 112.8L141.8 114.6L141.4 117.8L140.3 118.2L139.1 118.3L139.1 115.9L138.7 114.1ZM141.0 108.3L141.3 110.4L140.7 112.4L139.5 111.1L139.5 109.6L140.8 109.1ZM167.9 126.6L169.2 126.4L171.1 127.0L173.2 127.2L172.8 127.8L170.3 127.9L167.9 127.2ZM184.6 127.8L185.8 127.3L187.3 126.9L189.0 126.2L187.9 127.8L185.9 128.7L184.8 128.4ZM144.3 71.2L146.6 69.8L147.1 71.5L146.2 73.5L144.5 72.8ZM141.8 71.8L143.5 71.7L143.7 73.2L142.4 73.3ZM157.6 66.0L158.9 63.4L159.7 63.6L158.7 66.7L157.8 67.1ZM164.6 62.1L166.3 60.9L167.5 61.4L166.3 62.5L165.0 63.2ZM127.5 116.9L129.0 116.0L129.7 116.6L129.0 117.6L128.1 117.4ZM224.6 174.6L225.9 174.3L226.9 174.6L225.9 175.1ZM175.9 125.1L176.8 124.4L176.6 125.5ZM400.0 106.2L401.6 104.6L400.6 104.6ZM402.9 103.6L406.3 101.7L404.8 102.0ZM120.1 56.3L121.2 54.7L121.4 52.8L120.3 54.0ZM109.1 48.1L110.6 46.9L110.6 48.9ZM91.0 142.5L92.5 142.2L91.8 143.3ZM95.6 143.1L96.9 141.8L96.7 142.9ZM108.7 66.7L111.4 61.4L110.0 63.2ZM197.7 209.5L198.1 209.9L198.3 210.6L197.9 210.4ZM139.3 191.5L140.1 191.7L139.7 192.4ZM299.6 172.7L300.1 173.7L299.7 176.4L299.2 176.0ZM323.3 201.7L325.1 201.5L326.2 204.0L324.7 203.2ZM434.3 61.1L435.8 59.2L436.4 60.7L434.9 61.8ZM463.0 4.9L466.6 2.0L470.4 3.1L468.5 5.5L464.7 5.8ZM388.6 -9.3L396.2 -8.7L396.2 -11.3Z" fill="#f2efe9" stroke="#d9c9d6" stroke-width="0.3" fill-rule="nonzero"/>
<path d="M364.8 -3.5L364.6 6.6L360.1 18.6L358.2 30.8L363.9 39.7L370.0 48.1L365.8 52.0L355.3 55.1L345.8 53.6L338.2 57.7L330.6 63.2L324.9 70.2M280.1 4.9L284.0 13.3L289.7 23.6L288.7 30.8L290.6 41.9L294.4 50.1L296.3 59.6L300.1 70.2L298.2 79.9M255.4 28.0L248.7 30.8L247.8 37.6L248.7 44.0L254.5 52.0L262.1 52.0L269.7 52.8L277.3 57.7L281.1 66.7L281.1 73.5L283.0 79.9M27.0 199.4L24.2 201.3L18.5 202.7L12.8 204.6L9.0 204.4L3.3 205.9L-0.5 204.6" fill="none" stroke="#aad3df" stroke-width="0.5" stroke-opacity="0.6" stroke-linejoin="round"/>
<path d="M106.4 111.1L107.5 110.6L110.6 111.1L111.4 111.9L110.0 113.4L109.8 116.6L108.9 116.9L109.8 120.3L109.1 122.7M119.7 107.5L124.5 109.1L129.2 109.8M127.9 85.8L131.1 89.0L134.2 90.5L135.3 90.5L138.8 92.0L137.6 95.9M137.6 95.9L134.8 99.8L136.5 100.6L135.7 102.8L136.5 105.2L137.4 106.2M137.6 95.9L141.4 96.2L143.1 97.9L140.3 100.9L136.5 100.6M129.6 84.9L132.7 84.9L134.6 86.7L134.6 83.6L136.5 82.4L136.9 79.0M134.6 86.7L135.3 90.5M139.5 73.8L142.0 74.2M150.2 77.1L150.9 81.2L151.7 86.1L146.4 88.2L149.4 92.5L147.9 96.2L141.4 96.2M143.1 97.9L146.7 98.4L149.2 99.0L153.8 98.4M149.4 92.5L151.7 92.0L155.3 93.1L155.7 94.8L153.8 98.4M151.7 86.1L154.2 87.6L158.9 90.5L161.4 91.1L166.2 91.7M155.3 93.1L158.9 90.5M155.7 94.8L158.9 95.4L162.2 93.4L165.2 93.7M165.2 93.7L166.2 91.7L168.8 87.3L168.1 84.6L168.1 81.2L168.6 77.1L167.9 76.1M160.4 75.3L166.5 75.6L167.9 76.1M166.5 75.6L166.5 73.5L163.7 72.5M167.9 76.1L172.2 76.1L173.8 71.2M163.1 69.8L170.5 68.8L173.8 71.2M169.4 63.6L172.6 63.9L175.3 65.0M173.8 71.2L176.8 69.8L175.9 65.7L175.3 65.0L175.3 60.3L176.4 57.7M176.8 69.8L182.0 71.5L182.1 74.5L185.4 78.3L182.9 79.3L183.7 82.7M168.1 84.6L174.9 84.3L181.4 85.2L183.7 82.7M183.7 82.7L188.6 83.6L190.9 87.9L195.5 89.3L199.7 90.2L198.9 95.1L195.8 97.3M165.2 93.7L166.7 94.8L170.5 95.7L173.8 94.0L176.8 94.2L178.5 95.1L180.4 99.3L176.8 101.7L176.8 99.0L173.8 94.0M176.8 101.7L179.7 102.5M165.2 93.7L163.5 99.3L161.8 100.1L159.1 100.6L154.5 99.0L153.8 98.4M161.8 100.1L163.9 103.3L166.0 104.4L166.3 105.2L166.7 106.2L171.9 106.5L174.5 105.4L177.6 106.5M166.3 105.2L165.8 110.1L166.9 112.6L169.8 112.1L173.2 111.6L173.8 112.6L172.6 113.9M173.2 111.6L176.4 110.9M161.2 116.6L163.1 113.9L166.7 112.6M160.1 111.1L162.4 110.9L163.1 113.9M162.4 110.9L165.8 110.1M160.1 111.1L161.2 109.1L161.8 108.3L160.1 107.0M162.4 110.9L164.3 110.1L163.9 108.6L161.8 108.3M153.2 102.5L155.3 102.5L159.3 103.3L160.1 107.0L158.4 109.6M153.2 102.5L154.0 105.2L156.6 108.3M159.3 103.3L159.3 100.6M149.0 101.7L152.3 101.7L154.5 99.0M144.3 59.6L146.4 55.9L146.6 52.0L146.2 49.3L146.4 44.0L149.6 39.7L150.7 34.0L152.6 29.4L154.4 23.6L157.6 18.6L161.4 16.0L162.4 15.7M162.4 15.7L164.3 14.4L168.3 17.0L170.7 18.0L172.6 12.2L176.4 10.0L178.9 14.4L178.1 15.7L182.0 12.7M162.4 15.7L168.3 21.6L167.9 28.9L169.0 31.7M178.1 15.7L177.4 20.1L180.2 22.6L178.5 26.5L180.4 32.2L179.5 35.8L181.2 38.9L180.2 41.0L183.1 44.4L180.0 50.5L176.1 53.8M109.3 73.5L107.7 75.1L109.3 76.4L111.2 76.4M191.7 125.5L193.0 123.6L195.5 123.6L199.3 123.8L203.6 122.7L208.4 122.7L207.6 120.0L206.9 117.4L208.4 116.6M202.1 112.1L205.9 113.1L206.3 115.6L208.4 116.6M199.3 107.3L204.0 107.8L208.6 109.1L211.4 111.1L214.1 112.9L215.6 111.4M205.9 113.1L208.8 112.6L211.4 111.1M208.8 112.6L209.9 113.9L211.6 117.1L211.6 118.6M208.4 116.6L211.6 118.6L214.5 116.6L216.2 119.8M191.7 128.7L192.8 129.6L191.3 131.7L190.9 133.0L190.7 135.7L189.8 140.1M189.9 132.1L191.3 131.7M191.1 133.0L193.2 133.9L197.0 131.5L201.2 129.2L203.6 122.7M188.3 136.2L189.6 140.1M189.8 140.3L191.8 140.7L194.5 139.0L195.5 137.9L193.6 135.7L197.7 134.2L197.0 131.5M197.7 134.2L200.0 134.8L203.3 136.6L208.2 140.7L211.6 141.0L213.9 138.8L214.5 139.0M211.6 141.0L213.5 142.3L215.3 142.3M208.4 122.7L210.7 125.9L209.5 130.1L211.1 132.4L214.3 135.0L213.9 136.8L215.4 139.0M204.6 167.1L205.4 165.1L209.2 165.1L212.6 165.9L214.9 163.5L222.1 161.9L227.8 159.9L229.1 155.9L228.2 154.4L223.2 154.0L221.3 151.3M222.1 161.9L224.2 166.6M228.2 154.4L229.7 151.7L230.5 149.9M219.8 150.1L220.6 150.5M225.7 122.3L228.6 120.5L232.0 120.0L236.0 121.9L239.6 124.1L239.6 126.4L238.3 130.1L239.0 135.7L240.8 135.9L239.0 139.3L240.6 141.6L242.7 145.0L243.4 146.3L240.4 149.3M239.0 139.3L242.1 140.3L245.1 140.3L249.3 139.2L249.3 137.0L252.9 135.0L255.0 134.8L255.4 132.1L256.9 131.7L256.2 130.1L258.5 129.9L259.4 127.3L258.6 125.2L261.1 123.6L265.1 123.1L265.7 122.7M239.6 126.4L241.7 127.1L243.2 125.7L245.9 124.8L248.0 122.4L249.7 122.3L252.2 122.7L255.0 122.9L256.7 121.7L257.3 120.0L258.8 120.0L259.4 123.1L259.6 123.8L262.6 122.1L265.7 122.7M249.7 122.2L248.0 120.3L244.9 118.6L241.9 115.9L240.9 113.1L237.5 112.4L237.3 110.4L234.5 109.1L231.6 112.6L229.7 112.6L227.2 110.9L224.8 110.1L223.1 111.5M229.7 112.6L229.7 103.0L234.7 101.4L239.4 104.9L241.1 107.0L246.7 106.5L248.9 108.3L248.7 110.9L249.7 111.1L252.7 113.4L254.5 112.4L258.1 110.2M258.1 110.2L258.6 108.8L263.0 109.6L263.2 108.3L264.5 107.8L267.2 108.8L273.9 108.8L275.8 110.4M275.8 110.4L272.5 112.1L269.5 113.4L265.7 114.6L263.6 116.1L263.2 117.2L263.6 119.3L265.5 119.5L265.7 122.7M263.2 117.2L259.8 117.6L257.3 116.9L255.0 115.9L257.3 115.1L257.5 113.6L260.2 114.9L262.1 113.9L259.8 112.1L258.1 110.2M252.2 122.7L252.6 120.7L253.3 120.3L252.0 118.3L253.5 117.1L255.0 115.9L254.5 112.4M216.8 99.3L215.4 96.5L212.8 94.2L211.6 93.7L212.6 91.4L212.2 88.2L215.6 89.3L219.8 84.0L223.1 84.6L226.9 86.1L229.1 87.3L233.1 85.8L236.4 87.6L240.0 86.7L240.6 85.2L237.3 83.3L239.2 82.1L238.9 79.9L239.6 78.0L239.2 77.1L242.1 76.8L247.2 75.5L252.9 73.5L254.5 72.5L257.9 72.5L258.6 76.1L262.8 77.1L269.3 75.5L268.7 77.1L271.4 79.0L275.6 86.7L281.9 86.1L285.5 90.2L289.3 91.4M289.3 91.4L286.4 93.7L285.9 97.3L281.1 97.0L279.8 101.7L275.4 103.0L276.9 107.8L275.8 110.4M289.3 91.4L293.8 89.3L298.6 86.7L303.2 89.0L308.3 89.9L310.2 87.6L311.4 82.7L317.6 85.2L317.8 87.3L326.2 88.2L329.6 91.1L333.8 91.7L337.8 90.5L340.7 88.2L345.2 89.6M290.2 91.4L290.6 93.1L296.1 97.9L296.3 102.5L301.1 103.3L304.7 104.9L306.6 109.1L313.5 109.3L322.8 111.9L327.7 109.8L333.2 109.1L336.1 106.5L336.1 103.0L339.3 103.6L342.9 102.0L345.0 99.5L351.3 98.4L346.6 95.7L343.1 95.1L343.9 92.5L345.2 89.6M345.2 89.6L347.3 90.5L350.2 88.7L350.0 87.9L353.0 81.2L351.7 80.6L353.4 79.0L358.4 78.3L362.2 79.9L365.8 88.5L366.0 89.6L371.9 92.2L372.3 95.7L375.3 95.7L379.7 93.7L376.4 102.8L374.2 102.2L372.4 103.6L373.0 107.3L371.7 109.8M371.7 109.8L370.0 109.8L366.7 110.9L367.3 112.1L364.6 111.4L359.9 115.9M364.3 121.2L365.2 120.0L367.5 119.3M328.7 156.9L326.2 155.9L323.5 153.2L319.2 154.8L317.4 155.0L316.9 157.5L315.7 157.5L313.6 156.9L312.1 155.7L311.2 151.5L308.9 150.9L311.0 144.4L308.3 142.7M317.4 155.0L319.5 158.3L322.2 158.7L321.1 161.1L323.3 162.7L326.2 166.9L327.7 169.8L327.7 171.2L327.9 175.1L324.9 177.6L324.5 176.4L321.8 178.7M315.7 157.5L313.6 159.2L314.4 160.9L315.7 160.7L315.4 164.7L317.3 164.3L318.4 164.0L319.9 163.1L322.4 164.9L322.6 167.3L324.1 168.6L323.9 171.0L323.3 171.2L327.7 170.4M319.0 176.2L318.2 172.7L319.2 171.2L323.3 171.2M313.6 159.2L309.6 160.5L308.5 162.9L310.8 167.3L310.0 169.4L311.9 173.7L312.5 176.6L311.0 179.1M308.3 142.7L305.8 144.8L304.1 146.3L303.2 149.3L302.2 152.0L300.7 151.7L300.9 155.9L299.4 157.3L298.8 158.5M292.5 156.1L292.1 151.7L290.8 150.5L291.4 146.7L294.0 147.6L294.0 149.0L299.0 149.7L296.9 151.5L296.7 152.8L298.8 153.8L299.4 157.3M265.7 122.7L267.6 125.5L271.2 126.6L274.4 128.9L273.3 131.7L273.1 136.2L277.3 138.6L279.4 138.4L283.2 141.2L286.8 143.3L290.8 143.5M277.3 138.6L275.6 141.6L277.7 142.7L281.7 144.8L284.3 145.5L286.4 146.3L290.8 146.7L290.8 143.5M290.8 143.5L292.3 144.8L292.7 145.9L298.2 145.8L298.4 143.8L297.5 143.8L293.8 142.9L292.3 144.8M297.5 143.8L300.7 142.0L303.9 140.7L306.2 140.3L308.3 142.7M252.9 152.4L255.6 151.1L258.3 150.9L256.4 147.6L257.1 143.3L260.7 141.6L262.8 139.2L265.1 136.6L264.9 134.6L266.4 133.9L264.0 131.9L264.0 128.5L269.3 128.5L271.2 126.6M313.6 186.4L315.5 187.7L317.4 186.8M331.7 194.7L332.5 196.2L334.8 196.6L336.7 195.9L339.9 195.9L341.6 194.7L342.2 193.0L343.1 190.6L346.9 190.6M391.5 203.4L391.5 215.8M119.0 127.6L119.9 132.4L120.9 134.2L116.3 135.5L116.1 137.0L113.1 139.2L106.6 141.8L106.6 144.8L114.0 149.7L125.4 158.3L129.4 161.9L131.1 161.7M98.0 144.0L106.6 144.0M106.6 144.8L106.6 147.6L100.3 147.6L100.3 152.8L98.4 153.8L98.4 157.3L91.0 157.3M114.0 149.7L110.6 149.7L112.7 166.9L113.1 168.8L105.5 168.8L102.8 169.0L101.3 168.6L99.9 170.2M99.9 170.2L96.5 166.7L92.1 166.9M99.9 170.2L101.5 174.9L97.1 174.5L91.4 175.0M97.1 174.5L97.1 176.2L94.6 177.6M91.2 172.5L94.6 172.2L96.9 172.7L94.6 173.3L91.2 173.5M101.5 174.9L106.2 177.6L107.9 179.1L107.4 181.4L108.5 182.6L107.2 184.1L108.9 187.3L108.9 190.2M97.8 181.4L99.4 179.7L103.0 179.7L103.5 182.4L101.3 185.4M103.5 182.4L107.2 184.1M107.9 179.1L112.7 178.7L113.3 175.8L114.8 175.1L115.5 172.9L117.4 172.4L119.3 171.4L121.8 169.6L123.5 169.8L125.1 172.9L127.3 174.9L127.7 175.3M112.7 178.7L118.0 180.5L117.1 185.6L117.8 188.8M118.0 180.5L117.8 177.6L123.2 177.4L124.1 182.4L125.4 186.9M123.2 177.4L124.9 177.6L127.7 175.3L130.0 176.2M124.9 177.6L126.2 181.4L126.2 186.6M128.3 186.4L128.5 181.4L130.0 176.2M123.5 169.8L129.8 169.0L131.1 166.1L131.1 161.7L134.2 160.9L137.4 158.1L146.0 152.8M146.0 152.8L142.2 150.7L141.0 147.2L142.0 144.4L141.2 138.6L140.3 134.4L138.9 133.5L137.4 130.5L138.9 128.5L139.5 123.4M141.2 138.6L142.8 137.0L142.8 135.3L145.0 133.7L145.0 132.0M146.0 152.8L150.2 154.6L151.7 153.8L168.8 160.9L168.8 159.9L170.7 159.9L170.7 155.9L170.7 135.5M170.7 155.9L193.4 155.9M130.0 176.2L131.0 172.7L136.5 173.7L140.3 174.1L142.2 173.1L149.0 172.4L148.8 171.0L152.6 166.1L152.8 159.9L151.7 153.8M139.3 189.6L140.8 186.2L144.7 185.8L146.4 182.4L149.4 177.6L150.9 176.6L150.0 173.5L149.0 172.4M150.9 176.6L151.9 179.5L149.8 179.5L152.6 184.3L150.7 187.1L150.9 189.4L153.8 194.3L154.0 195.3M152.6 184.3L158.5 183.3L159.5 181.4L163.1 179.9L166.7 177.6L165.0 174.3L166.0 171.6L168.8 168.4L168.8 160.9M166.7 177.6L167.9 182.0L170.7 178.9L176.4 180.7L178.3 178.9L182.1 179.9L184.8 176.2L186.3 175.3L186.1 178.2L188.0 180.5L188.4 178.3L189.9 176.0L191.8 174.3L192.6 171.2L193.6 165.9L196.6 163.9M192.6 171.2L195.3 170.0L199.5 170.8L203.8 174.7L202.7 177.6L205.0 177.6L205.4 176.6M204.8 177.8L205.0 180.5L206.9 181.4L212.6 183.3L214.5 183.3L208.8 189.0L205.0 189.8L202.9 191.0L198.3 192.1L195.7 191.7L191.7 190.1L191.5 189.8L189.8 188.1L187.9 185.2L185.9 183.7L188.0 182.2L188.0 180.5M202.9 191.0L201.2 193.2L201.2 200.2L202.3 201.7M191.5 189.8L187.9 190.6L188.6 191.5L189.8 195.3L187.7 198.3L187.7 200.4L194.9 204.4L194.7 205.1L197.7 207.4M187.9 190.6L185.9 191.1L182.1 191.5L182.0 191.9L179.3 189.8L175.3 188.8L173.4 186.0L167.9 182.0M175.3 188.8L170.7 189.0L166.0 190.6L162.2 190.2L158.5 191.9L157.0 197.9L154.0 202.3L153.4 205.9L150.6 207.6L148.1 207.2L146.0 208.0M158.5 191.9L154.0 195.3L148.5 194.3L144.7 194.2L141.8 194.2M141.8 196.6L144.7 196.6L144.7 194.2M148.5 194.3L150.7 199.4L150.6 202.3L145.4 203.4L144.3 205.9M182.0 191.9L182.7 194.3L179.5 198.5L179.7 201.1L178.3 203.6L178.9 206.8M181.8 214.1L178.1 214.6L177.2 216.2L177.8 218.7L177.2 221.0L179.9 224.2L178.3 224.1L174.9 220.6L171.3 220.6L168.8 219.2L165.4 219.8L164.6 212.3L160.3 211.8L154.7 209.7L146.6 209.9M168.8 219.2L168.8 223.3L165.0 223.3L165.0 229.5L167.7 232.3L171.3 232.7M145.6 231.7L149.8 231.9L158.2 231.9L163.9 233.1L167.7 232.3M163.1 233.7L163.1 241.1L161.2 241.1L161.2 254.5L156.3 255.2L154.5 255.0M161.2 246.9L162.5 251.1L166.3 248.4L171.7 248.8L172.4 246.7L174.5 244.4L179.1 241.6L175.9 238.1L171.3 232.7L174.5 233.1L178.1 229.1L181.0 228.4L185.8 230.5L185.9 235.1L185.0 239.7L182.7 242.0L179.1 241.6M182.7 242.0L184.0 246.3L183.9 249.4L185.8 251.2M183.9 249.4L182.1 249.4L181.8 251.5L184.2 251.2M174.5 257.1L176.8 255.2L179.1 256.7L178.5 258.2L176.8 259.3L175.3 258.6L174.5 257.1M181.0 228.4L180.6 226.8L186.3 225.2L185.4 224.5L185.9 220.6L186.5 216.5L185.8 216.3L182.1 214.8L181.8 214.1M186.5 216.5L187.7 216.5M189.6 220.6L195.5 220.0L200.0 218.5M186.3 225.2L188.8 226.2L191.5 227.0L191.3 229.1L190.3 231.3L188.4 229.1L188.6 226.0M187.7 200.4L181.2 200.4L181.8 203.0L181.0 204.0L181.8 204.7L179.1 206.8M178.3 203.6L181.2 203.0M179.7 201.1L181.2 200.4M9.0 182.4L6.3 187.3L7.6 188.7L3.8 190.9L0.2 190.7L1.4 194.7L-1.5 197.0L-4.2 196.2M7.6 188.7L8.8 190.0L9.7 191.1L9.2 194.2L11.1 196.0L15.6 194.9L19.4 194.2L22.5 194.3L24.8 190.9M14.5 187.1L14.1 188.7L12.8 190.9L13.3 191.9L15.6 194.9M20.4 187.7L19.6 190.6L19.4 194.2M21.5 266.2L21.3 263.5L17.3 260.0L13.5 258.4L12.4 263.5L12.0 266.9M13.5 258.4L16.8 254.5L20.8 251.7L19.2 248.6L19.8 245.3L17.7 245.3L17.2 241.8L13.0 241.3L12.4 237.5L13.7 233.1L8.6 229.7L8.0 224.8L3.6 223.3L-1.1 217.1L-3.6 217.3L-8.2 219.4M19.2 248.6L16.8 252.2L11.6 252.2L13.5 248.6L9.0 245.3L4.0 241.6L0.8 242.8L-0.9 241.3L-4.7 242.8M12.4 237.5L10.7 235.7L5.7 236.3L4.0 241.6" fill="none" stroke="#cdb3d0" stroke-width="0.5" stroke-linejoin="round"/>
<path d="M213.9 100.9L216.4 99.0L218.9 98.2L221.2 97.6L223.2 97.9L224.4 99.3L224.0 102.0L221.7 102.0L220.2 103.3L218.9 104.4L220.6 106.7L220.8 108.0L222.9 109.1L223.4 111.6L223.8 113.1L226.9 111.4L227.2 113.4L225.0 114.1L224.0 115.9L225.0 117.6L225.7 122.2L225.9 123.4L223.1 123.8L220.2 123.8L218.7 122.4L217.3 121.9L216.2 119.8L216.4 117.8L217.2 117.4L217.3 115.4L219.0 115.0L217.3 114.3L216.8 113.4L215.8 111.4L214.5 109.6L213.5 108.3L213.5 106.2L213.4 104.6L212.2 103.8L212.8 101.7ZM233.9 100.6L234.9 100.9L235.2 104.4L234.3 104.6ZM237.5 99.5L239.2 97.9L240.8 99.3L238.9 100.1ZM263.0 101.4L264.9 99.5L267.8 98.2L271.6 99.0L273.9 98.4L272.5 99.8L267.8 99.5L264.9 101.7L264.0 103.0L263.2 102.8ZM320.5 84.3L322.6 84.6L325.8 81.5L329.6 78.3L332.1 73.5L332.3 70.8L331.0 71.2L329.6 75.1L326.8 79.0L323.9 82.1ZM183.5 200.0L185.0 198.1L187.7 197.7L188.2 199.1L187.9 200.8L186.7 202.8L185.0 203.4L183.9 203.0L183.7 201.3ZM178.9 204.9L179.7 207.0L179.5 209.9L181.2 212.7L182.3 215.0L181.4 214.4L180.0 211.8L178.5 209.5L178.7 206.6ZM187.9 216.7L189.0 218.5L189.0 221.3L190.1 224.3L190.1 225.8L189.2 225.2L188.2 222.3L188.0 219.4ZM180.6 55.9L183.1 56.3L185.6 53.6L185.8 51.3L182.1 49.3L180.2 51.6ZM188.4 52.0L191.3 52.4L192.4 50.1L190.1 45.6L188.8 44.8L189.0 48.9ZM146.7 61.1L148.3 61.4L149.8 59.2L148.5 58.1ZM191.7 190.2L192.2 191.9L193.0 193.8L192.0 192.8ZM149.8 173.7L150.9 172.9L150.4 174.3ZM268.2 109.8L270.3 108.9L272.2 109.1L270.6 110.5ZM374.3 104.1L375.9 102.2L375.3 104.4ZM312.7 123.4L314.6 122.9L314.6 124.1ZM209.0 120.3L209.9 122.4L210.5 121.9L209.5 120.0ZM203.8 119.3L205.7 118.6L205.4 119.8ZM320.5 173.1L322.0 174.7L321.4 174.5Z" fill="#aad3df"/>
<g fill-opacity="0.8" stroke-opacity="0.45" stroke-width="1.4"><circle cx="-6.7" cy="175.0" r="9.45" fill="#00e400" stroke="#00e400"/><circle cx="13.4" cy="267.5" r="9.45" fill="#999999" stroke="#999999"/><circle cx="129.6" cy="122.7" r="9.45" fill="#999999" stroke="#999999"/><circle cx="157.6" cy="104.6" r="9.45" fill="#ffff00" stroke="#ffff00"/><circle cx="164.6" cy="108.3" r="9.45" fill="#ff7e00" stroke="#ff7e00"/><circle cx="98.1" cy="179.3" r="9.45" fill="#ffff00" stroke="#ffff00"/><circle cx="108.6" cy="173.8" r="9.45" fill="#999999" stroke="#999999"/><circle cx="116.0" cy="187.4" r="9.45" fill="#ffff00" stroke="#ffff00"/><circle cx="124.0" cy="186.8" r="9.45" fill="#ffff00" stroke="#ffff00"/><circle cx="152.7" cy="174.4" r="9.45" fill="#ffff00" stroke="#ffff00"/><circle cx="192.4" cy="133.2" r="9.45" fill="#999999" stroke="#999999"/><circle cx="208.7" cy="130.1" r="9.45" fill="#ff0000" stroke="#ff0000"/><circle cx="215.6" cy="139.1" r="9.45" fill="#ff7e00" stroke="#ff7e00"/><circle cx="211.9" cy="149.2" r="9.45" fill="#999999" stroke="#999999"/><circle cx="220.2" cy="147.3" r="9.45" fill="#ffff00" stroke="#ffff00"/><circle cx="229.2" cy="150.5" r="9.45" fill="#ffff00" stroke="#ffff00"/><circle cx="198.3" cy="156.0" r="9.45" fill="#ffff00" stroke="#ffff00"/><circle cx="185.6" cy="168.0" r="9.45" fill="#00e400" stroke="#00e400"/><circle cx="197.6" cy="179.3" r="9.45" fill="#999999" stroke="#999999"/><circle cx="185.0" cy="196.3" r="9.45" fill="#999999" stroke="#999999"/><circle cx="235.0" cy="120.3" r="9.45" fill="#ffff00" stroke="#ffff00"/><circle cx="259.8" cy="85.4" r="9.45" fill="#ff0000" stroke="#ff0000"/><circle cx="254.8" cy="110.8" r="9.45" fill="#ffff00" stroke="#ffff00"/><circle cx="266.0" cy="108.3" r="9.45" fill="#ff0000" stroke="#ff0000"/><circle cx="270.4" cy="107.1" r="9.45" fill="#ffff00" stroke="#ffff00"/><circle cx="255.0" cy="117.9" r="9.45" fill="#ff0000" stroke="#ff0000"/><circle cx="255.5" cy="128.1" r="9.45" fill="#ff0000" stroke="#ff0000"/><circle cx="263.0" cy="128.7" r="9.45" fill="#ff7e00" stroke="#ff7e00"/><circle cx="266.1" cy="134.2" r="9.45" fill="#ff0000" stroke="#ff0000"/><circle cx="270.4" cy="141.0" r="9.45" fill="#ff7e00" stroke="#ff7e00"/><circle cx="251.6" cy="149.0" r="9.45" fill="#ff0000" stroke="#ff0000"/><circle cx="290.2" cy="154.0" r="9.45" fill="#999999" stroke="#999999"/><circle cx="286.5" cy="142.9" r="9.45" fill="#00e400" stroke="#00e400"/><circle cx="296.3" cy="150.9" r="9.45" fill="#ff0000" stroke="#ff0000"/><circle cx="262.5" cy="161.3" r="9.45" fill="#ff7e00" stroke="#ff7e00"/><circle cx="273.6" cy="163.2" r="9.45" fill="#ffff00" stroke="#ffff00"/><circle cx="276.7" cy="171.8" r="9.45" fill="#ffff00" stroke="#ffff00"/><circle cx="276.0" cy="184.8" r="9.45" fill="#00e400" stroke="#00e400"/><circle cx="306.9" cy="165.0" r="9.45" fill="#ffff00" stroke="#ffff00"/><circle cx="324.8" cy="155.8" r="9.45" fill="#ffff00" stroke="#ffff00"/><circle cx="319.2" cy="163.2" r="9.45" fill="#ff0000" stroke="#ff0000"/><circle cx="327.2" cy="176.8" r="9.45" fill="#ffff00" stroke="#ffff00"/><circle cx="339.1" cy="150.7" r="9.45" fill="#ffff00" stroke="#ffff00"/><circle cx="327.1" cy="94.6" r="9.45" fill="#ff7e00" stroke="#ff7e00"/><circle cx="359.4" cy="110.9" r="9.45" fill="#ff0000" stroke="#ff0000"/><circle cx="345.2" cy="115.0" r="9.45" fill="#ff0000" stroke="#ff0000"/><circle cx="355.1" cy="135.9" r="9.45" fill="#00e400" stroke="#00e400"/><circle cx="327.2" cy="208.9" r="9.45" fill="#ff7e00" stroke="#ff7e00"/></g><g font-family="Liberation Sans,Arial,sans-serif" font-weight="bold" font-size="7.8" text-anchor="middle" fill="#111" stroke="#fff" stroke-width="2.4" stroke-linejoin="round" paint-order="stroke"><text x="13.4" y="269.1">N/A</text><text x="129.6" y="124.3">N/A</text><text x="157.6" y="106.2">66</text><text x="164.6" y="109.9">125</text><text x="98.1" y="180.9">83</text><text x="108.6" y="175.4">N/A</text><text x="116.0" y="189.0">98</text><text x="124.0" y="188.4">70</text><text x="152.7" y="176.0">84</text><text x="192.4" y="134.8">N/A</text><text x="208.7" y="131.7">155</text><text x="215.6" y="140.7">142</text><text x="211.9" y="150.8">N/A</text><text x="220.2" y="148.9">55</text><text x="229.2" y="152.1">37</text><text x="228.8" y="150.1">57</text><text x="198.3" y="157.6">63</text><text x="185.6" y="169.6">148</text><text x="185.6" y="169.6">48</text><text x="197.6" y="180.9">N/A</text><text x="185.0" y="197.9">N/A</text><text x="235.0" y="121.9">57</text><text x="254.8" y="112.4">84</text><text x="266.0" y="109.9">163</text><text x="270.4" y="108.7">95</text><text x="255.0" y="119.5">153</text><text x="255.5" y="129.7">171</text><text x="263.0" y="130.3">121</text><text x="266.1" y="135.8">152</text><text x="270.4" y="142.6">124</text><text x="251.6" y="150.6">162</text><text x="290.2" y="155.6">N/A</text><text x="286.5" y="144.5">137</text><text x="286.5" y="144.5">37</text><text x="296.3" y="152.5">162</text><text x="262.5" y="162.9">131</text><text x="273.6" y="164.8">94</text><text x="276.7" y="173.4">53</text><text x="276.0" y="186.4">44</text><text x="306.9" y="166.6">80</text><text x="324.8" y="157.4">94</text><text x="319.2" y="164.8">163</text><text x="327.2" y="178.4">73</text><text x="339.1" y="152.3">72</text><text x="327.1" y="96.2">132</text><text x="359.4" y="112.5">169</text><text x="345.2" y="116.6">191</text><text x="355.1" y="137.5">50</text><text x="327.2" y="210.5">120</text></g>
</svg>
<div id="pop"><div class="l">Bishkek</div><div class="l">2020-11-17 7:00 PM</div><div class="l">(LT)</div>
<table><tr><th style="width:54.5px">Pollutant</th><th>AQI</th></tr><tr><td>PM2.5</td><td class="v">163</td></tr></table></div>
<div id="tip"></div>
</div>

<div class="abs ph" style="left:501px;top:3.5px;width:222px">Select a City</div>
<div class="abs sel" style="left:500px;top:28px;width:223.5px">Bishkek</div>
<div class="abs ph" style="left:501px;top:66.5px;width:222px">Select a Parameter</div>
<div class="abs sel" style="left:500px;top:91px;width:223.5px">PM2.5</div>

<div class="abs x" style="left:697px;top:32px">×</div><div class="abs car" style="left:710px;top:38px"></div>
<div class="abs x" style="left:697px;top:95px">×</div><div class="abs car" style="left:710px;top:101px"></div>
<div class="abs" id="rss"><b>Bishkek</b>
<svg width="23" height="23" viewBox="0 0 23 23" style="position:absolute;left:192px;top:16.5px"><rect width="23" height="23" rx="1.5" fill="#f2b234"/><circle cx="6.3" cy="17" r="2.2" fill="#fff"/><path d="M4.2 9.6a9.3 9.3 0 0 1 9.3 9.3M4.2 4.6a14.3 14.3 0 0 1 14.3 14.3" fill="none" stroke="#fff" stroke-width="2.9"/></svg></div>
<div class="abs" id="note">Note: Values above 500 are considered Beyond the AQI. Follow recommendations for the Hazardous category. Additional information on reducing exposure to extremely high levels of particle pollution is available <b><u>here</u></b>.</div>
<div class="abs" id="learn">Learn more about how the Air Quality Index [AQI] is calculated from the EPA <b><u>here</u></b>.</div>
<div class="abs tab on" style="left:11px;width:72px">AQI</div>
<div class="abs tab off" style="left:85px;width:111px">Concentration</div>
<div class="abs tab off" style="left:198px;width:92px">Historical</div>
<div class="abs" style="left:11px;top:336px;width:713px;height:1px;background:#aaa"></div>

<div id="chart" class="abs"><svg width="534" height="211" viewBox="11 370 534 211" style="position:absolute;left:0;top:0"><rect x="61.3" y="507.35" width="477.1" height="0.8" fill="#e4e4e4"/><rect x="61.3" y="483.00" width="477.1" height="0.8" fill="#e4e4e4"/><rect x="61.3" y="458.65" width="477.1" height="0.8" fill="#e4e4e4"/><rect x="61.3" y="434.30" width="477.1" height="0.8" fill="#e4e4e4"/><rect x="61.3" y="409.95" width="477.1" height="0.8" fill="#e4e4e4"/><g font-family="DejaVu Sans,Verdana,sans-serif" font-size="7" fill="#111" stroke="#111" stroke-width="0.2" text-anchor="end"><text x="51.5" y="534.7">0</text><text x="51.5" y="510.4">100</text><text x="51.5" y="486.0">200</text><text x="51.5" y="461.7">300</text><text x="51.5" y="437.3">400</text><text x="51.5" y="413.0">500</text></g><text transform="translate(31,468.4) rotate(-90)" font-family="DejaVu Sans,Verdana,sans-serif" font-size="7.3" fill="#333" text-anchor="middle">AQI</text><text x="278" y="385.8" font-family="DejaVu Sans,Verdana,sans-serif" font-size="12" letter-spacing="-0.2" fill="#333" text-anchor="middle">Bishkek – PM2.5</text><rect x="66.84" y="521.01" width="10.2" height="11.09" fill="#999" opacity="0.35"/><rect x="66.14" y="520.51" width="10" height="11.59" fill="#00e400" stroke="#3a3a2a" stroke-width="0.8"/><rect x="86.72" y="522.49" width="10.2" height="9.61" fill="#999" opacity="0.35"/><rect x="86.02" y="521.99" width="10" height="10.11" fill="#00e400" stroke="#3a3a2a" stroke-width="0.8"/><rect x="106.60" y="521.64" width="10.2" height="10.46" fill="#999" opacity="0.35"/><rect x="105.90" y="521.14" width="10" height="10.96" fill="#00e400" stroke="#3a3a2a" stroke-width="0.8"/><rect x="126.48" y="520.50" width="10.2" height="11.60" fill="#999" opacity="0.35"/><rect x="125.78" y="520.00" width="10" height="12.10" fill="#00e400" stroke="#3a3a2a" stroke-width="0.8"/><rect x="146.36" y="516.60" width="10.2" height="15.50" fill="#999" opacity="0.35"/><rect x="145.66" y="516.10" width="10" height="16.00" fill="#ffff00" stroke="#3a3a2a" stroke-width="0.8"/><rect x="166.24" y="514.82" width="10.2" height="17.28" fill="#999" opacity="0.35"/><rect x="165.54" y="514.32" width="10" height="17.78" fill="#ffff00" stroke="#3a3a2a" stroke-width="0.8"/><rect x="186.11" y="516.60" width="10.2" height="15.50" fill="#999" opacity="0.35"/><rect x="185.41" y="516.10" width="10" height="16.00" fill="#ffff00" stroke="#3a3a2a" stroke-width="0.8"/><rect x="205.99" y="517.26" width="10.2" height="14.84" fill="#999" opacity="0.35"/><rect x="205.29" y="516.76" width="10" height="15.34" fill="#ffff00" stroke="#3a3a2a" stroke-width="0.8"/><rect x="225.87" y="514.70" width="10.2" height="17.40" fill="#999" opacity="0.35"/><rect x="225.17" y="514.20" width="10" height="17.90" fill="#ffff00" stroke="#3a3a2a" stroke-width="0.8"/><rect x="245.75" y="510.93" width="10.2" height="21.17" fill="#999" opacity="0.35"/><rect x="245.05" y="510.43" width="10" height="21.67" fill="#ffff00" stroke="#3a3a2a" stroke-width="0.8"/><rect x="265.63" y="509.61" width="10.2" height="22.49" fill="#999" opacity="0.35"/><rect x="264.93" y="509.11" width="10" height="22.99" fill="#ffff00" stroke="#3a3a2a" stroke-width="0.8"/><rect x="285.51" y="510.51" width="10.2" height="21.59" fill="#999" opacity="0.35"/><rect x="284.81" y="510.01" width="10" height="22.09" fill="#ffff00" stroke="#3a3a2a" stroke-width="0.8"/><rect x="305.39" y="509.22" width="10.2" height="22.88" fill="#999" opacity="0.35"/><rect x="304.69" y="508.72" width="10" height="23.38" fill="#ffff00" stroke="#3a3a2a" stroke-width="0.8"/><rect x="325.27" y="500.70" width="10.2" height="31.40" fill="#999" opacity="0.35"/><rect x="324.57" y="500.20" width="10" height="31.90" fill="#ff7e00" stroke="#3a3a2a" stroke-width="0.8"/><rect x="345.15" y="495.22" width="10.2" height="36.88" fill="#999" opacity="0.35"/><rect x="344.45" y="494.72" width="10" height="37.38" fill="#ff0000" stroke="#3a3a2a" stroke-width="0.8"/><rect x="365.03" y="491.69" width="10.2" height="40.41" fill="#999" opacity="0.35"/><rect x="364.33" y="491.19" width="10" height="40.91" fill="#ff0000" stroke="#3a3a2a" stroke-width="0.8"/><rect x="384.91" y="489.26" width="10.2" height="42.84" fill="#999" opacity="0.35"/><rect x="384.21" y="488.76" width="10" height="43.34" fill="#ff0000" stroke="#3a3a2a" stroke-width="0.8"/><rect x="404.79" y="491.94" width="10.2" height="40.16" fill="#999" opacity="0.35"/><rect x="404.09" y="491.44" width="10" height="40.66" fill="#ff0000" stroke="#3a3a2a" stroke-width="0.8"/><rect x="424.66" y="491.94" width="10.2" height="40.16" fill="#999" opacity="0.35"/><rect x="423.96" y="491.44" width="10" height="40.66" fill="#ff0000" stroke="#3a3a2a" stroke-width="0.8"/><rect x="444.54" y="493.64" width="10.2" height="38.46" fill="#999" opacity="0.35"/><rect x="443.84" y="493.14" width="10" height="38.96" fill="#ff0000" stroke="#3a3a2a" stroke-width="0.8"/><rect x="464.42" y="494.61" width="10.2" height="37.49" fill="#999" opacity="0.35"/><rect x="463.72" y="494.11" width="10" height="37.99" fill="#ff0000" stroke="#3a3a2a" stroke-width="0.8"/><rect x="484.30" y="494.61" width="10.2" height="37.49" fill="#999" opacity="0.35"/><rect x="483.60" y="494.11" width="10" height="37.99" fill="#ff0000" stroke="#3a3a2a" stroke-width="0.8"/><rect x="504.18" y="493.64" width="10.2" height="38.46" fill="#999" opacity="0.35"/><rect x="503.48" y="493.14" width="10" height="38.96" fill="#ff0000" stroke="#3a3a2a" stroke-width="0.8"/><rect x="524.06" y="492.91" width="10.2" height="39.19" fill="#999" opacity="0.35"/><rect x="523.36" y="492.41" width="10" height="39.69" fill="#ff0000" stroke="#3a3a2a" stroke-width="0.8"/><rect x="61.3" y="531.90" width="477.1" height="0.8" fill="#c0d0e0"/><rect x="60.90" y="532.10" width="0.8" height="6.3" fill="#c0d0e0"/><rect x="80.78" y="532.10" width="0.8" height="6.3" fill="#c0d0e0"/><rect x="100.66" y="532.10" width="0.8" height="6.3" fill="#c0d0e0"/><rect x="120.54" y="532.10" width="0.8" height="6.3" fill="#c0d0e0"/><rect x="140.42" y="532.10" width="0.8" height="6.3" fill="#c0d0e0"/><rect x="160.30" y="532.10" width="0.8" height="6.3" fill="#c0d0e0"/><rect x="180.17" y="532.10" width="0.8" height="6.3" fill="#c0d0e0"/><rect x="200.05" y="532.10" width="0.8" height="6.3" fill="#c0d0e0"/><rect x="219.93" y="532.10" width="0.8" height="6.3" fill="#c0d0e0"/><rect x="239.81" y="532.10" width="0.8" height="6.3" fill="#c0d0e0"/><rect x="259.69" y="532.10" width="0.8" height="6.3" fill="#c0d0e0"/><rect x="279.57" y="532.10" width="0.8" height="6.3" fill="#c0d0e0"/><rect x="299.45" y="532.10" width="0.8" height="6.3" fill="#c0d0e0"/><rect x="319.33" y="532.10" width="0.8" height="6.3" fill="#c0d0e0"/><rect x="339.21" y="532.10" width="0.8" height="6.3" fill="#c0d0e0"/><rect x="359.09" y="532.10" width="0.8" height="6.3" fill="#c0d0e0"/><rect x="378.97" y="532.10" width="0.8" height="6.3" fill="#c0d0e0"/><rect x="398.85" y="532.10" width="0.8" height="6.3" fill="#c0d0e0"/><rect x="418.73" y="532.10" width="0.8" height="6.3" fill="#c0d0e0"/><rect x="438.60" y="532.10" width="0.8" height="6.3" fill="#c0d0e0"/><rect x="458.48" y="532.10" width="0.8" height="6.3" fill="#c0d0e0"/><rect x="478.36" y="532.10" width="0.8" height="6.3" fill="#c0d0e0"/><rect x="498.24" y="532.10" width="0.8" height="6.3" fill="#c0d0e0"/><rect x="518.12" y="532.10" width="0.8" height="6.3" fill="#c0d0e0"/><rect x="538.00" y="532.10" width="0.8" height="6.3" fill="#c0d0e0"/><g font-family="DejaVu Sans,Verdana,sans-serif" font-size="7" fill="#666" text-anchor="end"><text transform="translate(72.6,542.3) rotate(-45)">8 PM</text><text transform="translate(92.5,542.3) rotate(-45)">9 PM</text><text transform="translate(112.4,542.3) rotate(-45)">10 PM</text><text transform="translate(132.3,542.3) rotate(-45)">11 PM</text><text transform="translate(152.2,542.3) rotate(-45)">Nov 17, 2020 12 AM</text><text transform="translate(172.0,542.3) rotate(-45)">1 AM</text><text transform="translate(191.9,542.3) rotate(-45)">2 AM</text><text transform="translate(211.8,542.3) rotate(-45)">3 AM</text><text transform="translate(231.7,542.3) rotate(-45)">4 AM</text><text transform="translate(251.6,542.3) rotate(-45)">5 AM</text><text transform="translate(271.4,542.3) rotate(-45)">6 AM</text><text transform="translate(291.3,542.3) rotate(-45)">7 AM</text><text transform="translate(311.2,542.3) rotate(-45)">8 AM</text><text transform="translate(331.1,542.3) rotate(-45)">9 AM</text><text transform="translate(350.9,542.3) rotate(-45)">10 AM</text><text transform="translate(370.8,542.3) rotate(-45)">11 AM</text><text transform="translate(390.7,542.3) rotate(-45)">12 PM</text><text transform="translate(410.6,542.3) rotate(-45)">1 PM</text><text transform="translate(430.5,542.3) rotate(-45)">2 PM</text><text transform="translate(450.3,542.3) rotate(-45)">3 PM</text><text transform="translate(470.2,542.3) rotate(-45)">4 PM</text><text transform="translate(490.1,542.3) rotate(-45)">5 PM</text><text transform="translate(510.0,542.3) rotate(-45)">6 PM</text><text transform="translate(529.9,542.3) rotate(-45)">7 PM</text></g></svg></div>
<div id="cc" class="abs">
<div class="h"><div class="a">Current Conditions</div><div class="b">observed at</div><div class="c">Nov 17, 2020 7:00 PM (LT)</div></div>
<div class="r"><div>163 AQI</div><div>Unhealthy</div><div>PM2.5</div></div>
<div class="m"><div class="t">Health Message</div>Everyone may begin to experience health effects when AQI values are between 151 and 200. Members of sensitive groups may experience more serious health effects.</div>
</div>
</body>
</html>
